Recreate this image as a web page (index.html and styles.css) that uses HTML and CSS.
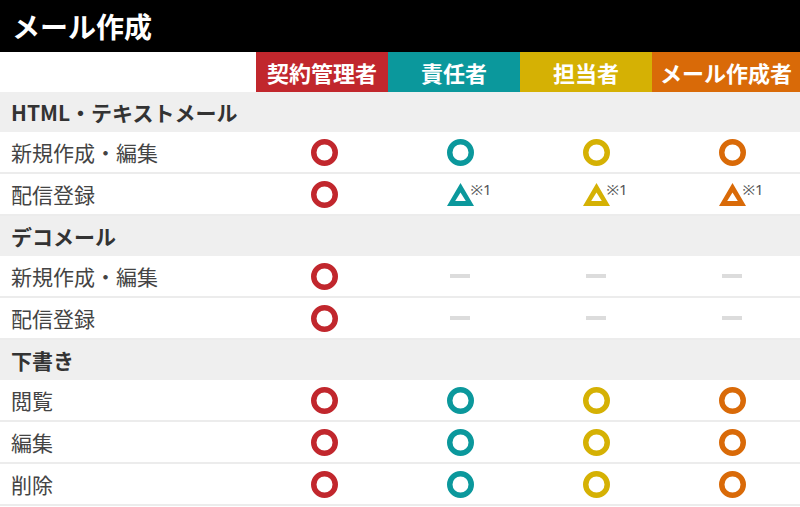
FILE: index.html
```html
<!DOCTYPE html>
<html lang="ja">
<head>
<meta charset="utf-8">
<title>メール作成</title>
<link rel="stylesheet" href="styles.css">
</head>
<body>
<header class="title-bar"><h1 class="title">メール作成</h1></header>
<div class="col-head">
  <div class="col-spacer"></div>
  <div class="role red">契約管理者</div>
  <div class="role teal">責任者</div>
  <div class="role yellow">担当者</div>
  <div class="role orange">メール作成者</div>
</div>
<div class="matrix">
  <div class="section">HTML・テキストメール</div>
  <div class="row">
    <div class="label">新規作成・編集</div>
    <div class="cell"><svg class="ring red-c" viewBox="0 0 27 27"><circle cx="13.5" cy="13.5" r="10.75"/></svg></div>
    <div class="cell"><svg class="ring teal-c" viewBox="0 0 27 27"><circle cx="13.5" cy="13.5" r="10.75"/></svg></div>
    <div class="cell"><svg class="ring yellow-c" viewBox="0 0 27 27"><circle cx="13.5" cy="13.5" r="10.75"/></svg></div>
    <div class="cell"><svg class="ring orange-c" viewBox="0 0 27 27"><circle cx="13.5" cy="13.5" r="10.75"/></svg></div>
  </div>
  <div class="row">
    <div class="label">配信登録</div>
    <div class="cell"><svg class="ring red-c" viewBox="0 0 27 27"><circle cx="13.5" cy="13.5" r="10.75"/></svg></div>
    <div class="cell"><span class="tri-wrap"><svg class="tri teal-c" viewBox="0 0 27 23"><path d="M13.5 0 L27 23 L0 23 Z M13.5 9.5 L8.2 18 L18.8 18 Z"/></svg><span class="note">※1</span></span></div>
    <div class="cell"><span class="tri-wrap"><svg class="tri yellow-c" viewBox="0 0 27 23"><path d="M13.5 0 L27 23 L0 23 Z M13.5 9.5 L8.2 18 L18.8 18 Z"/></svg><span class="note">※1</span></span></div>
    <div class="cell"><span class="tri-wrap"><svg class="tri orange-c" viewBox="0 0 27 23"><path d="M13.5 0 L27 23 L0 23 Z M13.5 9.5 L8.2 18 L18.8 18 Z"/></svg><span class="note">※1</span></span></div>
  </div>
  <div class="section">デコメール</div>
  <div class="row">
    <div class="label">新規作成・編集</div>
    <div class="cell"><svg class="ring red-c" viewBox="0 0 27 27"><circle cx="13.5" cy="13.5" r="10.75"/></svg></div>
    <div class="cell"><span class="dash"></span></div>
    <div class="cell"><span class="dash"></span></div>
    <div class="cell"><span class="dash"></span></div>
  </div>
  <div class="row">
    <div class="label">配信登録</div>
    <div class="cell"><svg class="ring red-c" viewBox="0 0 27 27"><circle cx="13.5" cy="13.5" r="10.75"/></svg></div>
    <div class="cell"><span class="dash"></span></div>
    <div class="cell"><span class="dash"></span></div>
    <div class="cell"><span class="dash"></span></div>
  </div>
  <div class="section">下書き</div>
  <div class="row">
    <div class="label">閲覧</div>
    <div class="cell"><svg class="ring red-c" viewBox="0 0 27 27"><circle cx="13.5" cy="13.5" r="10.75"/></svg></div>
    <div class="cell"><svg class="ring teal-c" viewBox="0 0 27 27"><circle cx="13.5" cy="13.5" r="10.75"/></svg></div>
    <div class="cell"><svg class="ring yellow-c" viewBox="0 0 27 27"><circle cx="13.5" cy="13.5" r="10.75"/></svg></div>
    <div class="cell"><svg class="ring orange-c" viewBox="0 0 27 27"><circle cx="13.5" cy="13.5" r="10.75"/></svg></div>
  </div>
  <div class="row">
    <div class="label">編集</div>
    <div class="cell"><svg class="ring red-c" viewBox="0 0 27 27"><circle cx="13.5" cy="13.5" r="10.75"/></svg></div>
    <div class="cell"><svg class="ring teal-c" viewBox="0 0 27 27"><circle cx="13.5" cy="13.5" r="10.75"/></svg></div>
    <div class="cell"><svg class="ring yellow-c" viewBox="0 0 27 27"><circle cx="13.5" cy="13.5" r="10.75"/></svg></div>
    <div class="cell"><svg class="ring orange-c" viewBox="0 0 27 27"><circle cx="13.5" cy="13.5" r="10.75"/></svg></div>
  </div>
  <div class="row">
    <div class="label">削除</div>
    <div class="cell"><svg class="ring red-c" viewBox="0 0 27 27"><circle cx="13.5" cy="13.5" r="10.75"/></svg></div>
    <div class="cell"><svg class="ring teal-c" viewBox="0 0 27 27"><circle cx="13.5" cy="13.5" r="10.75"/></svg></div>
    <div class="cell"><svg class="ring yellow-c" viewBox="0 0 27 27"><circle cx="13.5" cy="13.5" r="10.75"/></svg></div>
    <div class="cell"><svg class="ring orange-c" viewBox="0 0 27 27"><circle cx="13.5" cy="13.5" r="10.75"/></svg></div>
  </div>
</div>
</body>
</html>
```
FILE: styles.css
```css
* { box-sizing: border-box; }
html, body { margin: 0; padding: 0; background: #fff; }
body {
  width: 800px;
  font-family: "Noto Sans CJK JP", "Noto Sans", sans-serif;
  color: #3c3c3c;
}
.title-bar {
  background: #000;
  height: 52px;
  display: flex;
  align-items: center;
  padding-left: 12px;
}
.title {
  margin: 0;
  color: #fff;
  font-size: 28px;
  font-weight: 700;
  line-height: 1;
}
.col-head {
  display: grid;
  grid-template-columns: 256px 132px 132px 132px 148px;
  height: 40px;
}
.role {
  color: #fff;
  font-size: 22px;
  font-weight: 700;
  display: flex;
  align-items: center;
  justify-content: center;
  line-height: 1;
}
.role.red { background: #c1272d; }
.role.teal { background: #0b989c; }
.role.yellow { background: #d5b104; }
.role.orange { background: #d96a08; }
.red-c { color: #c1272d; }
.teal-c { color: #0b989c; }
.yellow-c { color: #d5b104; }
.orange-c { color: #d96a08; }
.section {
  background: #efefef;
  height: 40px;
  display: flex;
  align-items: center;
  padding-left: 11px;
  font-size: 21px;
  font-weight: 700;
  color: #333;
}
.row {
  display: grid;
  grid-template-columns: 256px repeat(4, 136px);
  height: 42px;
  border-bottom: 2px solid #ececec;
}
.label {
  display: flex;
  align-items: center;
  padding-left: 11px;
  font-size: 21px;
  color: #444;
}
.cell {
  display: flex;
  align-items: center;
  justify-content: center;
}
.ring { width: 27px; height: 27px; display: block; }
.ring circle { fill: none; stroke: currentColor; stroke-width: 5.5; }
.tri-wrap { position: relative; display: block; width: 27px; height: 23px; margin-top: 1px; }
.tri { width: 27px; height: 23px; display: block; }
.tri path { fill: currentColor; fill-rule: evenodd; }
.note {
  position: absolute;
  left: 24px;
  top: -1px;
  font-family: "Noto Sans", "Noto Sans CJK JP", sans-serif;
  font-size: 15px;
  line-height: 1;
  color: #555;
  white-space: nowrap;
}
.dash {
  display: block;
  width: 20px;
  height: 4px;
  background: #dcdcdc;
}
```
